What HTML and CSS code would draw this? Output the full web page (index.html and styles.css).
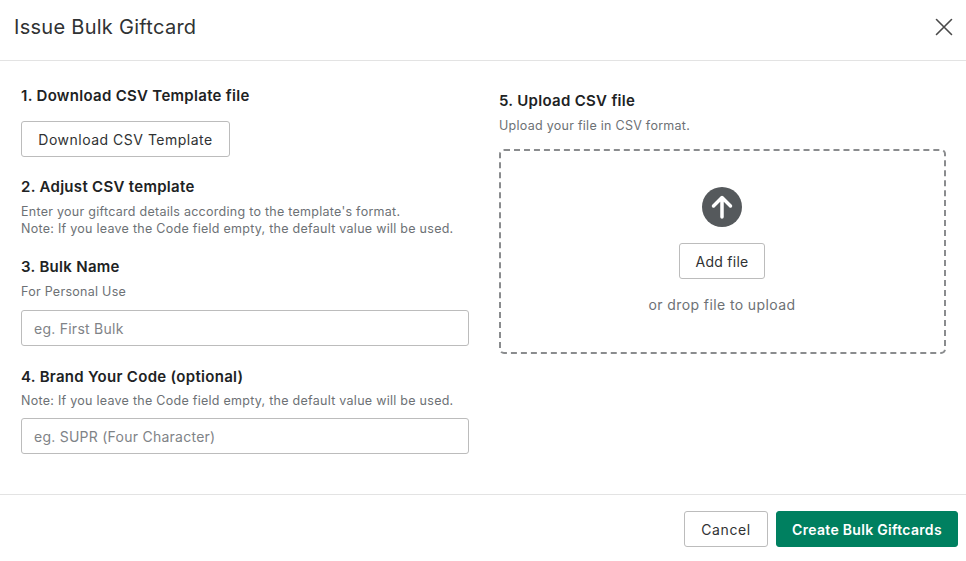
FILE: index.html
```html
<!DOCTYPE html>
<html lang="en">
<head>
<meta charset="utf-8">
<title>Issue Bulk Giftcard</title>
<link rel="stylesheet" href="styles.css">
</head>
<body>
<div class="modal">
  <header class="modal-header">
    <h1 class="modal-title">Issue Bulk Giftcard</h1>
    <button class="close" type="button" aria-label="Close">
      <svg width="18" height="18" viewBox="0 0 18 18" fill="none" stroke="#4a4a4a" stroke-width="1.6" stroke-linecap="round"><path d="M1.500 1.500l15 15M16.500 1.500l-15 15"/></svg>
    </button>
  </header>
  <main class="modal-body">
    <section class="col col-left">
      <h2 class="step step-1">1. Download CSV Template file</h2>
      <button class="btn btn-template" type="button">Download CSV Template</button>
      <h2 class="step step-2">2. Adjust CSV template</h2>
      <p class="hint">Enter your giftcard details according to the template's format.<br>Note: If you leave the Code field empty, the default value will be used.</p>
      <h2 class="step step-3">3. Bulk Name</h2>
      <p class="hint hint-single">For Personal Use</p>
      <input class="field" type="text" placeholder="eg. First Bulk">
      <h2 class="step step-4">4. Brand Your Code (optional)</h2>
      <p class="hint hint-note">Note: If you leave the Code field empty, the default value will be used.</p>
      <input class="field" type="text" placeholder="eg. SUPR (Four Character)">
    </section>
    <section class="col col-right">
      <h2 class="step">5. Upload CSV file</h2>
      <p class="hint hint-upload">Upload your file in CSV format.</p>
      <div class="dropzone">
        <svg class="upload-icon" width="40" height="40" viewBox="0 0 40 40"><circle cx="20" cy="20" r="20" fill="#55595c"/><path d="M20 30V11.500M11.500 19L20 10.500l8.500 8.500" fill="none" stroke="#fff" stroke-width="3.500" stroke-linecap="round" stroke-linejoin="round"/></svg>
        <button class="btn btn-add" type="button">Add file</button>
        <p class="drop-text">or drop file to upload</p>
      </div>
    </section>
  </main>
  <footer class="modal-footer">
    <button class="btn btn-cancel" type="button">Cancel</button>
    <button class="btn btn-primary" type="button">Create Bulk Giftcards</button>
  </footer>
</div>
</body>
</html>
```
FILE: styles.css
```css
* { box-sizing: border-box; }
html, body { margin: 0; padding: 0; background: #fff; }
body {
  width: 966px;
  height: 561px;
  overflow: hidden;
  font-family: Inter, "Noto Sans", sans-serif;
  color: #202223;
}
.modal { display: flex; flex-direction: column; height: 561px; }
.modal-header {
  height: 61px;
  border-bottom: 1px solid #e3e3e3;
  display: flex;
  align-items: center;
  justify-content: space-between;
  padding: 0 13px 7px 14px;
}
.modal-title { margin: 0; font-size: 20px; line-height: 26px; font-weight: 400; letter-spacing: 0.28px; color: #303233; }
.close { border: 0; background: none; padding: 0; width: 18px; height: 18px; display: block; }
.close svg { display: block; }
.modal-body { height: 433px; display: flex; gap: 30px; padding: 0 20px 0 21px; }
.col { width: 448px; display: flex; flex-direction: column; align-items: flex-start; }
.col-left { padding-top: 25px; }
.col-right { padding-top: 30px; }
.step { margin: 0; font-size: 15px; line-height: 20px; font-weight: 600; letter-spacing: 0.3px; color: #202223; }
.step-2 { margin-top: 20px; }
.step-3 { margin-top: 20px; }
.step-4 { margin-top: 21px; }
.hint { margin: 6px 0 0; font-size: 12.500px; line-height: 17px; letter-spacing: 0.27px; color: #6d7175; }
.hint-single { margin-top: 6px; margin-bottom: 10px; }
.hint-note { margin-top: 5px; margin-bottom: 9px; }
.hint-upload { margin-bottom: 15px; }
.btn {
  font-family: inherit;
  font-size: 14px;
  letter-spacing: 0.5px;
  background: #fff;
  color: #303233;
  border: 1px solid #bcbcbc;
  border-radius: 3px;
  padding: 0;
  height: 36px;
  display: block;
}
.btn-template { width: 209px; margin-top: 15px; }
.field {
  width: 448px;
  height: 36px;
  border: 1px solid #bcbcbc;
  border-radius: 3px;
  padding: 0 12px;
  font-family: inherit;
  font-size: 14px;
  letter-spacing: 0.25px;
  color: #303233;
  background: #fff;
  display: block;
}
.field::placeholder { color: #7f8387; opacity: 1; }
.dropzone {
  width: 447px;
  height: 205px;
  border: 2px dashed #8a8c8e;
  border-radius: 5px;
  display: flex;
  flex-direction: column;
  align-items: center;
  padding: 36px 1px 0 0;
}
.upload-icon { display: block; }
.btn-add { width: 86px; margin-top: 16px; letter-spacing: 0.25px; }
.drop-text { margin: 16px 0 0; font-size: 14px; line-height: 20px; letter-spacing: 0.4px; color: #6d7175; }
.modal-footer {
  flex: 1;
  border-top: 1px solid #e3e3e3;
  display: flex;
  justify-content: flex-end;
  align-items: flex-start;
  gap: 8px;
  padding: 16px 8px 0 0;
}
.btn-cancel { width: 84px; letter-spacing: 0.6px; }
.btn-primary {
  width: 182px;
  background: #008060;
  border-color: #008060;
  color: #fff;
  font-weight: 600;
  letter-spacing: 0.3px;
}
```
